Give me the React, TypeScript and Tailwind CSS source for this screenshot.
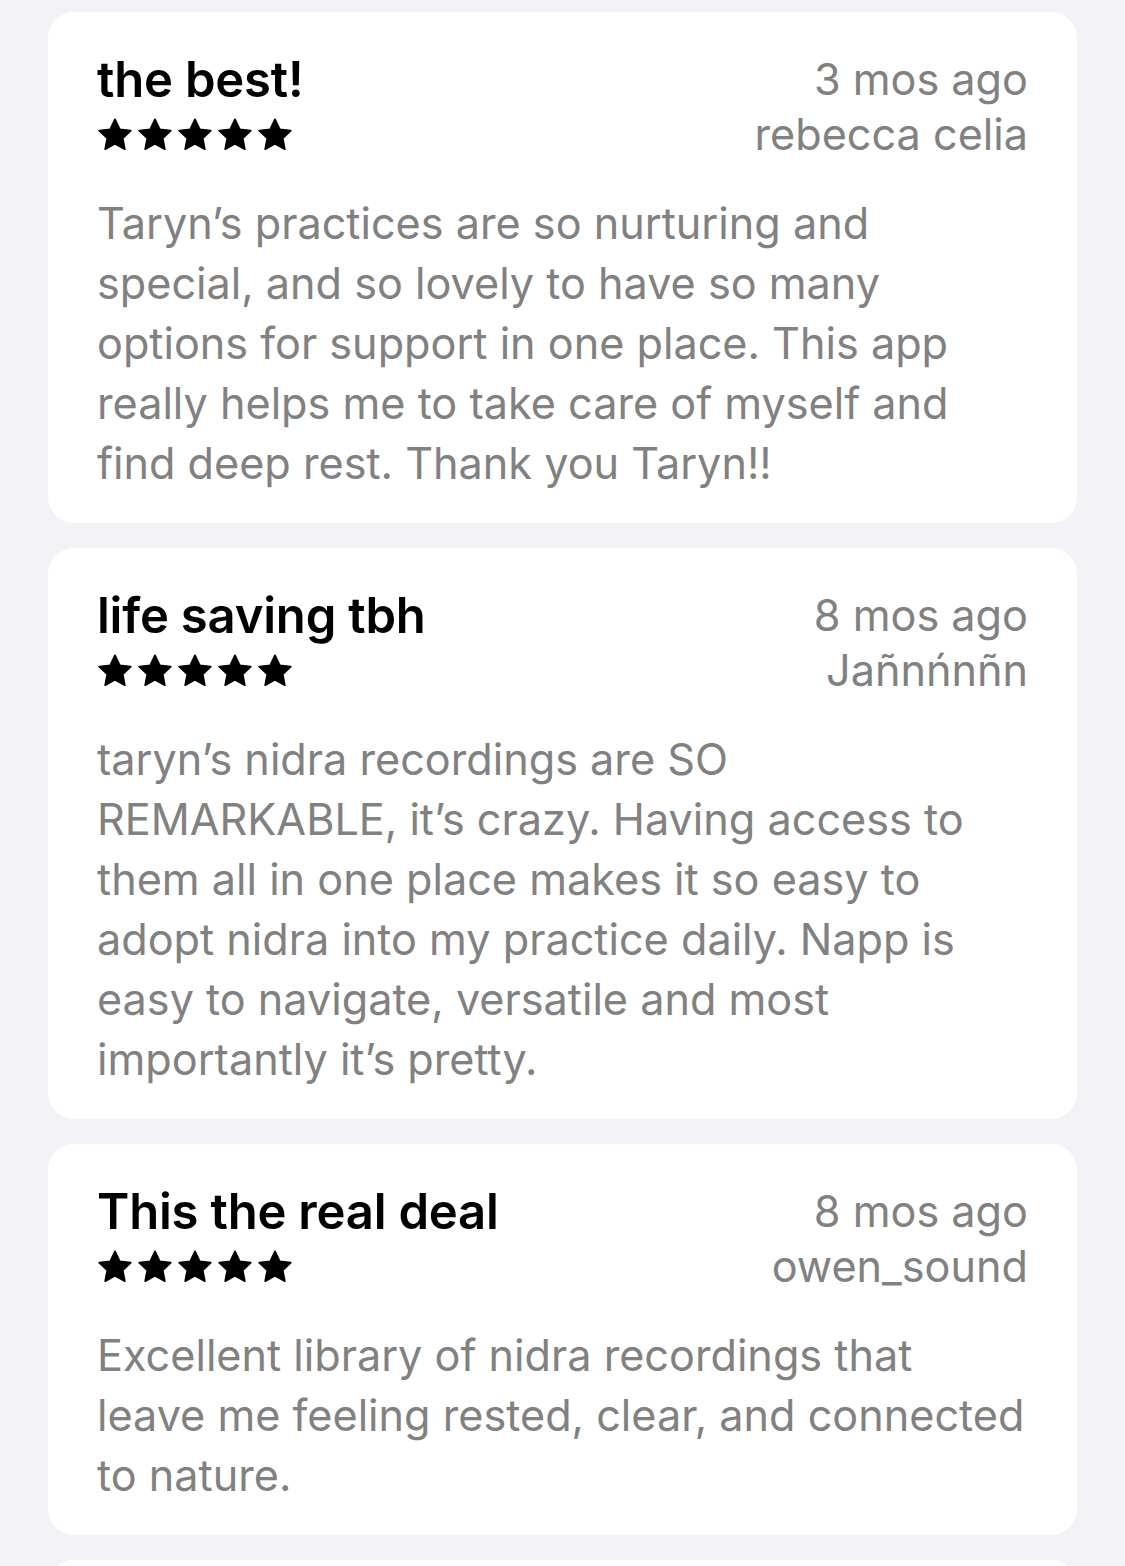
import React from "react";

type Review = { title: string; date: string; author: string; body: string[] };

const reviews: Review[] = [
  {
    title: "the best!",
    date: "3 mos ago",
    author: "rebecca celia",
    body: [
      "Taryn\u2019s practices are so nurturing and",
      "special, and so lovely to have so many",
      "options for support in one place. This app",
      "really helps me to take care of myself and",
      "find deep rest. Thank you Taryn!!",
    ],
  },
  {
    title: "life saving tbh",
    date: "8 mos ago",
    author: "Jañnńnñn",
    body: [
      "taryn\u2019s nidra recordings are SO",
      "REMARKABLE, it\u2019s crazy. Having access to",
      "them all in one place makes it so easy to",
      "adopt nidra into my practice daily. Napp is",
      "easy to navigate, versatile and most",
      "importantly it\u2019s pretty.",
    ],
  },
  {
    title: "This the real deal",
    date: "8 mos ago",
    author: "owen_sound",
    body: [
      "Excellent library of nidra recordings that",
      "leave me feeling rested, clear, and connected",
      "to nature.",
    ],
  },
];

function Star() {
  return (
    <svg width="34" height="33" viewBox="0 0 24 23.2" className="shrink-0">
      <path
        d="M12 0.9l3.35 7.05 7.75.95-5.7 5.35 1.5 7.65L12 18.1l-6.9 3.8 1.5-7.65L0.9 8.9l7.75-.95z"
        fill="#000"
        stroke="#000"
        strokeWidth="1.3"
        strokeLinejoin="round"
      />
    </svg>
  );
}

function Card({ r }: { r: Review }) {
  return (
    <div className="bg-white rounded-[26px] pl-[49px] pr-[49px] pt-[40px] pb-[30px]">
      <div className="flex justify-between">
        <div className="flex flex-col">
          <div className="text-[49px] leading-[55px] font-semibold text-black tracking-[-0.2px]">
            {r.title}
          </div>
          <div className="flex gap-[6px] h-[55px] items-center pl-[1px]">
            <Star />
            <Star />
            <Star />
            <Star />
            <Star />
          </div>
        </div>
        <div className="flex flex-col items-end text-[43.2px] leading-[55px] text-[#818181]">
          <div>{r.date}</div>
          <div>{r.author}</div>
        </div>
      </div>
      <div className="mt-[31px] text-[43.2px] leading-[60px] text-[#818181]">
        {r.body.map((l, i) => (
          <div key={i} className="whitespace-nowrap">
            {l}
          </div>
        ))}
      </div>
    </div>
  );
}

export default function App() {
  return (
    <div
      className="min-h-[1566px] bg-[#f2f2f7] px-[48px] pt-[12px] flex flex-col gap-[25px]"
      style={{ fontFamily: "Inter, 'Noto Sans', sans-serif" }}
    >
      {reviews.map((r, i) => (
        <Card key={i} r={r} />
      ))}
      <div className="bg-white rounded-[26px] h-[200px]" />
    </div>
  );
}
